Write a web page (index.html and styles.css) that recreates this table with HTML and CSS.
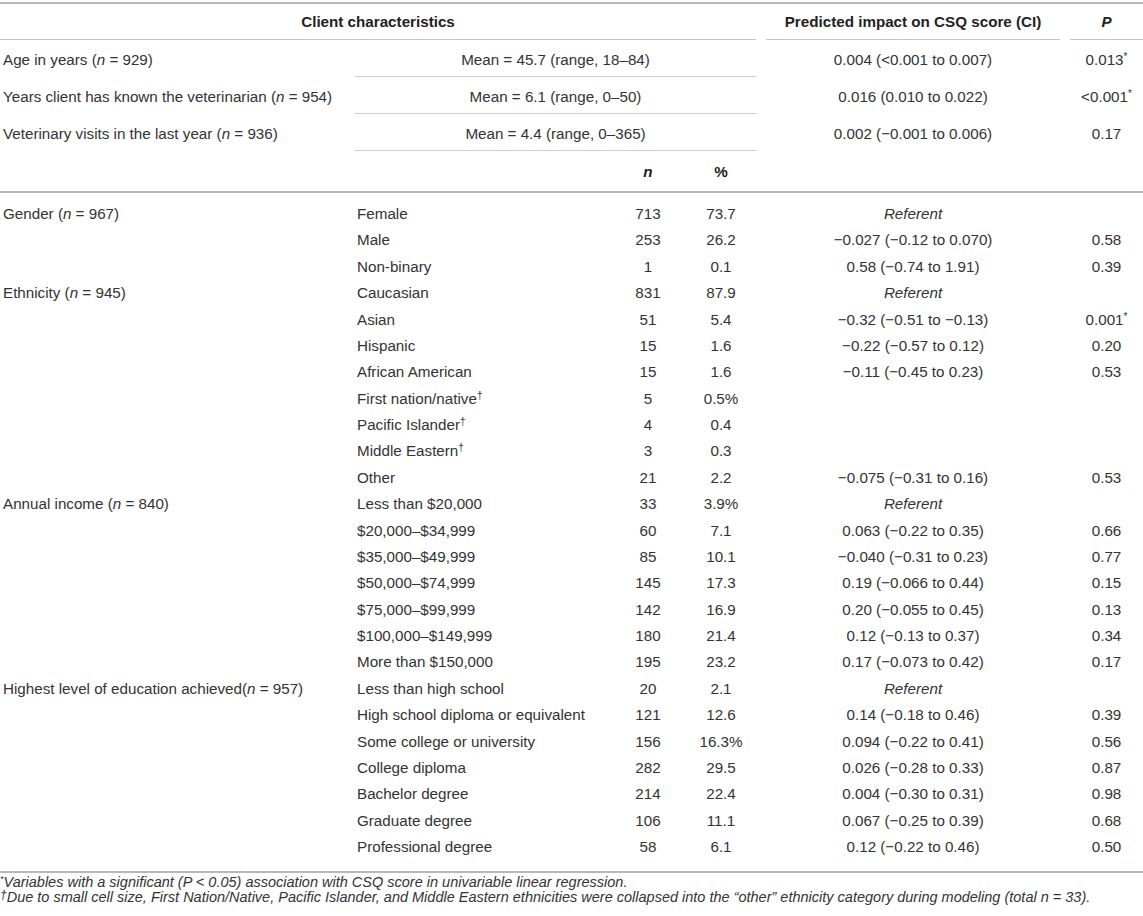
FILE: index.html
```html
<!DOCTYPE html>
<html lang="en">
<head>
<meta charset="utf-8">
<title>Client characteristics</title>
<link rel="stylesheet" href="styles.css">
</head>
<body>
<table class="tbl">
  <colgroup>
    <col class="c-label">
    <col class="c-sub">
    <col class="c-n">
    <col class="c-pct">
    <col class="c-pred">
    <col class="c-p">
  </colgroup>
  <thead>
    <tr class="hrow">
      <th colspan="4" class="h-main"><div class="hline">Client characteristics</div></th>
      <th class="h-pred"><div class="hline">Predicted impact on CSQ score (CI)</div></th>
      <th class="h-p"><div class="hline"><i>P</i></div></th>
    </tr>
  </thead>
  <tbody class="top">
    <tr>
      <td class="lab">Age in years (<i>n</i> = 929)</td>
      <td colspan="3" class="mean">Mean = 45.7 (range, 18–84)</td>
      <td class="pred">0.004 (&lt;0.001 to 0.007)</td>
      <td class="p">0.013<sup>*</sup></td>
    </tr>
    <tr>
      <td class="lab">Years client has known the veterinarian (<i>n</i> = 954)</td>
      <td colspan="3" class="mean">Mean = 6.1 (range, 0–50)</td>
      <td class="pred">0.016 (0.010 to 0.022)</td>
      <td class="p">&lt;0.001<sup>*</sup></td>
    </tr>
    <tr>
      <td class="lab">Veterinary visits in the last year (<i>n</i> = 936)</td>
      <td colspan="3" class="mean">Mean = 4.4 (range, 0–365)</td>
      <td class="pred">0.002 (−0.001 to 0.006)</td>
      <td class="p">0.17</td>
    </tr>
    <tr class="nrow">
      <td></td>
      <td></td>
      <td class="num"><b><i>n</i></b></td>
      <td class="num"><b>%</b></td>
      <td></td>
      <td></td>
    </tr>
  </tbody>
  <tbody class="cat">
    <tr class="first">
      <td class="lab">Gender (<i>n</i> = 967)</td>
      <td class="sub">Female</td>
      <td class="num">713</td>
      <td class="num">73.7</td>
      <td class="pred"><i>Referent</i></td>
      <td class="p"></td>
    </tr>
    <tr>
      <td class="lab"></td>
      <td class="sub">Male</td>
      <td class="num">253</td>
      <td class="num">26.2</td>
      <td class="pred">−0.027 (−0.12 to 0.070)</td>
      <td class="p">0.58</td>
    </tr>
    <tr>
      <td class="lab"></td>
      <td class="sub">Non-binary</td>
      <td class="num">1</td>
      <td class="num">0.1</td>
      <td class="pred">0.58 (−0.74 to 1.91)</td>
      <td class="p">0.39</td>
    </tr>
    <tr>
      <td class="lab">Ethnicity (<i>n</i> = 945)</td>
      <td class="sub">Caucasian</td>
      <td class="num">831</td>
      <td class="num">87.9</td>
      <td class="pred"><i>Referent</i></td>
      <td class="p"></td>
    </tr>
    <tr>
      <td class="lab"></td>
      <td class="sub">Asian</td>
      <td class="num">51</td>
      <td class="num">5.4</td>
      <td class="pred">−0.32 (−0.51 to −0.13)</td>
      <td class="p">0.001<sup>*</sup></td>
    </tr>
    <tr>
      <td class="lab"></td>
      <td class="sub">Hispanic</td>
      <td class="num">15</td>
      <td class="num">1.6</td>
      <td class="pred">−0.22 (−0.57 to 0.12)</td>
      <td class="p">0.20</td>
    </tr>
    <tr>
      <td class="lab"></td>
      <td class="sub">African American</td>
      <td class="num">15</td>
      <td class="num">1.6</td>
      <td class="pred">−0.11 (−0.45 to 0.23)</td>
      <td class="p">0.53</td>
    </tr>
    <tr>
      <td class="lab"></td>
      <td class="sub">First nation/native<sup>†</sup></td>
      <td class="num">5</td>
      <td class="num">0.5%</td>
      <td class="pred"></td>
      <td class="p"></td>
    </tr>
    <tr>
      <td class="lab"></td>
      <td class="sub">Pacific Islander<sup>†</sup></td>
      <td class="num">4</td>
      <td class="num">0.4</td>
      <td class="pred"></td>
      <td class="p"></td>
    </tr>
    <tr>
      <td class="lab"></td>
      <td class="sub">Middle Eastern<sup>†</sup></td>
      <td class="num">3</td>
      <td class="num">0.3</td>
      <td class="pred"></td>
      <td class="p"></td>
    </tr>
    <tr>
      <td class="lab"></td>
      <td class="sub">Other</td>
      <td class="num">21</td>
      <td class="num">2.2</td>
      <td class="pred">−0.075 (−0.31 to 0.16)</td>
      <td class="p">0.53</td>
    </tr>
    <tr>
      <td class="lab">Annual income (<i>n</i> = 840)</td>
      <td class="sub">Less than $20,000</td>
      <td class="num">33</td>
      <td class="num">3.9%</td>
      <td class="pred"><i>Referent</i></td>
      <td class="p"></td>
    </tr>
    <tr>
      <td class="lab"></td>
      <td class="sub">$20,000–$34,999</td>
      <td class="num">60</td>
      <td class="num">7.1</td>
      <td class="pred">0.063 (−0.22 to 0.35)</td>
      <td class="p">0.66</td>
    </tr>
    <tr>
      <td class="lab"></td>
      <td class="sub">$35,000–$49,999</td>
      <td class="num">85</td>
      <td class="num">10.1</td>
      <td class="pred">−0.040 (−0.31 to 0.23)</td>
      <td class="p">0.77</td>
    </tr>
    <tr>
      <td class="lab"></td>
      <td class="sub">$50,000–$74,999</td>
      <td class="num">145</td>
      <td class="num">17.3</td>
      <td class="pred">0.19 (−0.066 to 0.44)</td>
      <td class="p">0.15</td>
    </tr>
    <tr>
      <td class="lab"></td>
      <td class="sub">$75,000–$99,999</td>
      <td class="num">142</td>
      <td class="num">16.9</td>
      <td class="pred">0.20 (−0.055 to 0.45)</td>
      <td class="p">0.13</td>
    </tr>
    <tr>
      <td class="lab"></td>
      <td class="sub">$100,000–$149,999</td>
      <td class="num">180</td>
      <td class="num">21.4</td>
      <td class="pred">0.12 (−0.13 to 0.37)</td>
      <td class="p">0.34</td>
    </tr>
    <tr>
      <td class="lab"></td>
      <td class="sub">More than $150,000</td>
      <td class="num">195</td>
      <td class="num">23.2</td>
      <td class="pred">0.17 (−0.073 to 0.42)</td>
      <td class="p">0.17</td>
    </tr>
    <tr>
      <td class="lab">Highest level of education achieved(<i>n</i> = 957)</td>
      <td class="sub">Less than high school</td>
      <td class="num">20</td>
      <td class="num">2.1</td>
      <td class="pred"><i>Referent</i></td>
      <td class="p"></td>
    </tr>
    <tr>
      <td class="lab"></td>
      <td class="sub">High school diploma or equivalent</td>
      <td class="num">121</td>
      <td class="num">12.6</td>
      <td class="pred">0.14 (−0.18 to 0.46)</td>
      <td class="p">0.39</td>
    </tr>
    <tr>
      <td class="lab"></td>
      <td class="sub">Some college or university</td>
      <td class="num">156</td>
      <td class="num">16.3%</td>
      <td class="pred">0.094 (−0.22 to 0.41)</td>
      <td class="p">0.56</td>
    </tr>
    <tr>
      <td class="lab"></td>
      <td class="sub">College diploma</td>
      <td class="num">282</td>
      <td class="num">29.5</td>
      <td class="pred">0.026 (−0.28 to 0.33)</td>
      <td class="p">0.87</td>
    </tr>
    <tr>
      <td class="lab"></td>
      <td class="sub">Bachelor degree</td>
      <td class="num">214</td>
      <td class="num">22.4</td>
      <td class="pred">0.004 (−0.30 to 0.31)</td>
      <td class="p">0.98</td>
    </tr>
    <tr>
      <td class="lab"></td>
      <td class="sub">Graduate degree</td>
      <td class="num">106</td>
      <td class="num">11.1</td>
      <td class="pred">0.067 (−0.25 to 0.39)</td>
      <td class="p">0.68</td>
    </tr>
    <tr class="last">
      <td class="lab"></td>
      <td class="sub">Professional degree</td>
      <td class="num">58</td>
      <td class="num">6.1</td>
      <td class="pred">0.12 (−0.22 to 0.46)</td>
      <td class="p">0.50</td>
    </tr>
  </tbody>
</table>
<div class="notes">
  <p class="note"><sup>*</sup>Variables with a significant (P &lt; 0.05) association with CSQ score in univariable linear regression.</p>
  <p class="note"><sup class="dag">†</sup>Due to small cell size, First Nation/Native, Pacific Islander, and Middle Eastern ethnicities were collapsed into the “other” ethnicity category during modeling (total n = 33).</p>
</div>
</body>
</html>
```

FILE: styles.css
```css
html, body {
  margin: 0;
  padding: 0;
  background: #ffffff;
}

body {
  font-family: "Liberation Sans", Arial, Helvetica, sans-serif;
  color: #333333;
  font-size: 15.2px;
}

.tbl {
  width: 1143px;
  margin-top: 2px;
  border-collapse: collapse;
  table-layout: fixed;
  border-top: 2px solid #b9b9b9;
  border-bottom: 2px solid #b9b9b9;
}

.c-label { width: 355px; }
.c-sub { width: 255px; }
.c-n { width: 76px; }
.c-pct { width: 70px; }
.c-pred { width: 309px; }
.c-p { width: 78px; }

th, td {
  padding: 0;
  line-height: 18px;
  font-weight: normal;
  white-space: nowrap;
}

/* header */
.hrow th {
  text-align: center;
  font-weight: bold;
  color: #222222;
  padding: 0;
}

.hline {
  padding: 9px 0 8px;
  border-bottom: 1px solid #c4c4c4;
}

.h-pred {
  padding-left: 10px !important;
  padding-right: 5px !important;
}

.h-p {
  padding-left: 5px !important;
}

/* top numeric rows */
.top td {
  padding-top: 11px;
  padding-bottom: 7px;
}

.top .mean {
  text-align: center;
  border-bottom: 1px solid #cccccc;
}

.top .nrow td {
  padding-top: 12px;
  padding-bottom: 10px;
  border-bottom: 2px solid #b9b9b9;
}

.top .nrow .num b {
  color: #222222;
}

/* category rows */
.cat td {
  padding-top: 4.2px;
  padding-bottom: 4.2px;
}

.cat .first td {
  padding-top: 12px;
}

.cat .last td {
  padding-bottom: 15px;
}

.lab {
  padding-left: 3px !important;
  text-align: left;
}

.sub {
  padding-left: 2px !important;
  text-align: left;
}

.num {
  text-align: center;
}

.pred {
  text-align: center;
  padding-left: 10px !important;
  padding-right: 5px !important;
}

.p {
  text-align: center;
  padding-left: 5px !important;
}

sup {
  font-size: 10px;
  line-height: 0;
  vertical-align: 5px;
}

/* footnotes */
.notes {
  margin-top: 2px;
}

.note {
  margin: 0;
  font-size: 14.5px;
  line-height: 15px;
  font-style: italic;
  color: #333333;
}

.note sup {
  font-size: 9px;
  vertical-align: 5px;
}

.note .dag {
  font-size: 12px;
  vertical-align: 3px;
}
```
